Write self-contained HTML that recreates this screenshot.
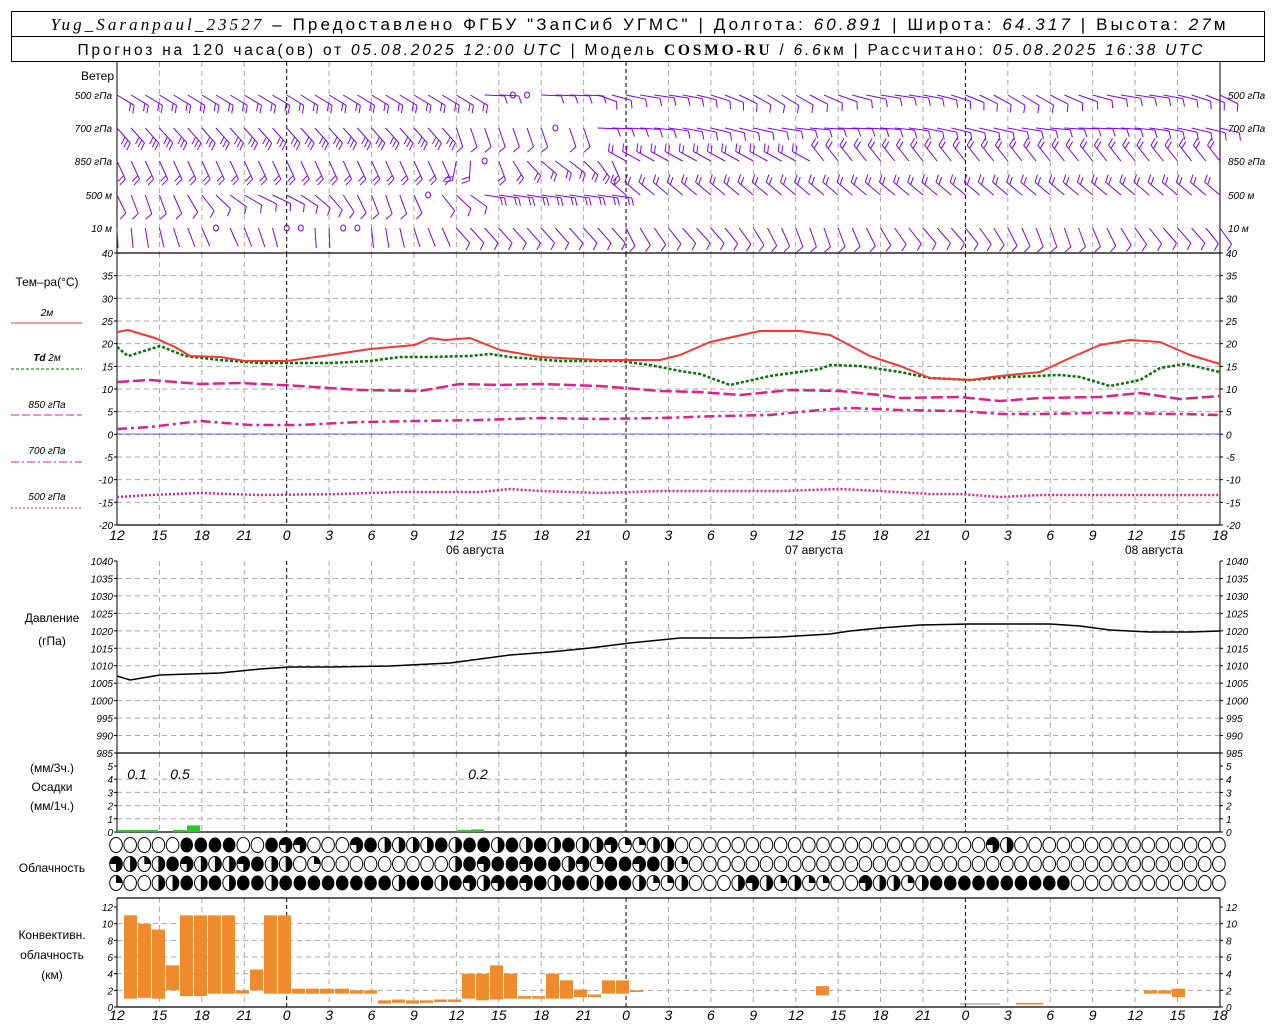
<!DOCTYPE html>
<html><head><meta charset="utf-8"><style>
html,body{margin:0;padding:0;background:#fff;}
svg{display:block;font-family:"Liberation Sans","DejaVu Sans",sans-serif;}
.ax{font-size:10px;font-style:italic;}
.lb{font-size:12px;}
.tm{font-size:14px;font-style:italic;}
</style></head><body>
<svg id="s" width="1280" height="1024" viewBox="0 0 1280 1024" xmlns="http://www.w3.org/2000/svg">
<rect x="0" y="0" width="1280" height="1024" fill="#fff"/>
<rect x="11.5" y="11.5" width="1253" height="50" fill="none" stroke="#000"/>
<line x1="11" y1="36.5" x2="1265" y2="36.5" stroke="#000"/>
<text x="638" y="30" text-anchor="middle" font-size="17" textLength="1175" lengthAdjust="spacing"><tspan font-family="Liberation Serif" font-style="italic">Yug_Saranpaul_23527</tspan> – Предоставлено ФГБУ "ЗапСиб УГМС" | Долгота: <tspan font-style="italic">60.891</tspan> | Широта: <tspan font-style="italic">64.317</tspan> | Высота: <tspan font-style="italic">27</tspan>м</text>
<text x="640" y="55" text-anchor="middle" font-size="15.5" textLength="1125" lengthAdjust="spacing">Прогноз на 120 часа(ов) от <tspan font-style="italic">05.08.2025 12:00 UTC</tspan> | Модель <tspan font-family="Liberation Serif" font-weight="bold">COSMO-RU</tspan> / <tspan font-style="italic">6.6</tspan>км | Рассчитано: <tspan font-style="italic">05.08.2025 16:38 UTC</tspan></text>
<g id="g"></g>
<text x="114" y="80" class="lb" text-anchor="end">Ветер</text>
<text x="47" y="286" class="lb" text-anchor="middle">Тем–ра(°C)</text>
<text x="47" y="316" class="ax" text-anchor="middle" font-style="normal">2м</text>
<line x1="11" y1="323" x2="82" y2="323" stroke="#f33"/>
<text x="47" y="361" class="ax" text-anchor="middle"><tspan font-weight="bold">Td</tspan> 2м</text>
<line x1="11" y1="369" x2="82" y2="369" stroke="#070" stroke-dasharray="3,2"/>
<text x="47" y="408" class="ax" text-anchor="middle">850 гПа</text>
<line x1="11" y1="415" x2="82" y2="415" stroke="#e0208a" stroke-dasharray="8,3"/>
<text x="47" y="454" class="ax" text-anchor="middle">700 гПа</text>
<line x1="11" y1="462" x2="82" y2="462" stroke="#e0208a" stroke-dasharray="8,3,2,3"/>
<text x="47" y="500" class="ax" text-anchor="middle">500 гПа</text>
<line x1="11" y1="508" x2="82" y2="508" stroke="#e0208a" stroke-dasharray="2,2"/>
<text x="52" y="622" class="lb" text-anchor="middle">Давление</text>
<text x="52" y="645" class="lb" text-anchor="middle">(гПа)</text>
<text x="52" y="772" class="lb" text-anchor="middle">(мм/3ч.)</text>
<text x="52" y="791" class="lb" text-anchor="middle">Осадки</text>
<text x="52" y="810" class="lb" text-anchor="middle">(мм/1ч.)</text>
<text x="52" y="872" class="lb" text-anchor="middle">Облачность</text>
<text x="52" y="939" class="lb" text-anchor="middle">Конвективн.</text>
<text x="52" y="959" class="lb" text-anchor="middle">облачность</text>
<text x="52" y="979" class="lb" text-anchor="middle">(км)</text>
<text x="137" y="779" class="tm" text-anchor="middle" font-size="13">0.1</text>
<text x="180" y="779" class="tm" text-anchor="middle" font-size="13">0.5</text>
<text x="478" y="779" class="tm" text-anchor="middle" font-size="13">0.2</text>
<text x="475" y="554" class="lb" text-anchor="middle" font-size="13">06 августа</text>
<text x="814" y="554" class="lb" text-anchor="middle" font-size="13">07 августа</text>
<text x="1154" y="554" class="lb" text-anchor="middle" font-size="13">08 августа</text>
</svg>
<script>
var NS="http://www.w3.org/2000/svg",G=document.getElementById('g');
function el(t,a,txt){var e=document.createElementNS(NS,t);for(var k in a)e.setAttribute(k,a[k]);if(txt!==undefined)e.textContent=txt;G.appendChild(e);return e;}
var X0=117,PX=14.14;function X(h){return X0+h*PX;}
var L=117,R=1220;
var panels=[[62,253],[253,525],[561,753],[753,832],[898,1007]];
for(var h=0;h<=78;h+=3){var x=X(h);var zero=(h==12||h==36||h==60);
 panels.forEach(function(p){el('line',{x1:x,y1:p[0],x2:x,y2:p[1],stroke:zero?'#000':'#aaa','stroke-dasharray':zero?'4,3':'5,4','stroke-width':1});});}
function hgrid(y0,y1,n,fmt,vals,rl){for(var i=0;i<=n;i++){var y=y0+(y1-y0)*i/n;if(i>0&&i<n)el('line',{x1:L,y1:y,x2:R,y2:y,stroke:'#aaa','stroke-dasharray':'5,4'});
 el('line',{x1:L-3,y1:y,x2:L,y2:y,stroke:'#000'});el('line',{x1:R,y1:y,x2:R+3,y2:y,stroke:'#000'});
 if(vals){el('text',{x:L-4,y:y+4,'class':'ax','text-anchor':'end'},vals[i]);if(rl)el('text',{x:R+6,y:y+4,'class':'ax'},vals[i]);}}}
var tv=[];for(var v=40;v>=-20;v-=5)tv.push(v);hgrid(253,525,12,0,tv,1);
var pv=[];for(var v=1040;v>=985;v-=5)pv.push(v);hgrid(561,753,11,0,pv,1);
hgrid(766,832,5,0,[5,4,3,2,1,0],1);
hgrid(907,1007,6,0,[12,10,8,6,4,2,0],1);
[[L,62,L,253],[R,62,R,253],[L,253,L,525],[R,253,R,525],[L,561,L,753],[R,561,R,753],[L,753,L,832],[R,753,R,832],[L,898,L,1007],[R,898,R,1007]].forEach(function(a){el('line',{x1:a[0],y1:a[1],x2:a[2],y2:a[3],stroke:'#000'});});
[[253],[525],[753],[832],[898],[1007]].forEach(function(a){el('line',{x1:L,y1:a[0],x2:R,y2:a[0],stroke:'#000','stroke-width':1.3});});
el('line',{x1:L,y1:434,x2:R,y2:434,stroke:'#33f','stroke-width':0.8});
var tl=[12,15,18,21,0,3,6,9,12,15,18,21,0,3,6,9,12,15,18,21,0,3,6,9,12,15,18];
tl.forEach(function(t,i){el('text',{x:X(i*3),y:540,'class':'tm','text-anchor':'middle'},t);el('text',{x:X(i*3),y:1020,'class':'tm','text-anchor':'middle'},t);});
var rows=[[95,'500 гПа'],[128,'700 гПа'],[161,'850 гПа'],[195,'500  м'],[228,'10   м']];
rows.forEach(function(r,ri){el('text',{x:112,y:r[0]+4,'class':'ax','text-anchor':'end'},r[1]);el('text',{x:1228,y:r[0]+4,'class':'ax'},r[1]);
 for(var h=0;h<=78;h++){var x=X(h),y=r[0];var a,nf;
  var s=Math.sin(h*0.37+ri*1.3);
  if(ri==0){a=h<26?2.6:(h<34?3.1:2.8+0.2*s);nf=h<26?2:1;}
  else if(ri==1){a=h<24?2.3:(h<34?1.9:3.0+0.1*s);nf=h<24?3:1;}
  else if(ri==2){a=h<24?2.0:(h<36?1.9+0.6*s:(h<50?-0.5:-0.9));nf=2;}
  else if(ri==3){a=h<26?2.3+0.4*s:(h<36?3.0:-0.7);nf=h<26?1:2;}
  else {a=h<24?1.8+0.2*s:(h<36?2.3:2.1+0.2*s);nf=h<24?0:1;}
  a=Math.PI-a;
  if((ri==4&&(h==7||h==12||h==13||h==16||h==17))||(ri==0&&(h==28||h==29))||(ri==1&&h==31)||(ri==2&&h==26)||(ri==3&&h==22)){el('ellipse',{cx:x,cy:y,rx:2.5,ry:3,fill:'none',stroke:'#8000ff'});continue;}
  var len=20,ux=Math.cos(a),uy=Math.sin(a);
  var x2=x+ux*len,y2=y+uy*len;
  el('line',{x1:x,y1:y,x2:x2,y2:y2,stroke:'#8000ff'});
  var fa=a+1.2;
  for(var f=0;f<nf;f++){var bx=x2-ux*f*4,by=y2-uy*f*4;
   el('line',{x1:bx,y1:by,x2:bx+Math.cos(fa)*8,y2:by+Math.sin(fa)*8,stroke:'#8000ff'});}
 }});
function poly(pts,st,dash,w){el('polyline',{points:pts,fill:'none',stroke:st,'stroke-width':w||2,'stroke-dasharray':dash||'none','stroke-linejoin':'round'});}
poly("117,497 150,495 200,493 260,495 340,494 400,492 480,492 510,489 540,491 600,493 660,491 720,491 780,491 840,489 880,491 930,494 960,494 1000,497 1040,495 1100,495 1220,495",'#e0208a','2,2',2.5);
poly("117,429 150,427 200,421 250,425 300,425 360,422 420,421 480,420 540,418 600,419 660,418 720,416 770,415 820,410 850,408 900,410 960,411 1000,414 1040,414 1100,413 1180,414 1220,415",'#e0208a','10,4,3,4',2.5);
poly("117,382 150,380 200,384 240,383 300,386 360,390 420,391 460,384 500,385 540,384 600,386 660,391 700,392 740,395 790,390 840,391 880,395 900,398 960,397 1000,401 1040,398 1100,397 1140,393 1180,399 1220,396",'#e0208a','12,4',2.5);
poly("117,347 128,356 160,346 185,356 220,360 260,363 330,363 370,361 400,357 430,357 470,356 490,354 510,357 560,361 620,361 650,365 680,371 700,374 730,385 770,376 820,369 830,365 860,366 900,372 930,378 970,380 1010,377 1060,375 1080,377 1110,386 1140,380 1160,368 1185,364 1220,372",'#070','3,2',2.5);
poly("117,332 128,330 155,338 175,347 190,356 220,357 245,361 287,361 330,355 370,349 415,345 430,338 445,340 470,338 500,350 540,357 600,360 660,360 680,355 710,342 760,331 800,331 830,335 870,356 900,366 930,378 970,380 1000,376 1040,372 1070,358 1100,345 1130,340 1160,342 1190,355 1220,364",'#f33','',2);
poly("117,676 130,680 160,675 190,674 220,673 260,669 290,667 330,667 390,666 450,663 480,659 510,655 550,652 590,648 630,643 680,638 740,638 780,637 830,634 850,631 880,628 920,625 970,624 1010,624 1050,624 1080,626 1110,630 1150,632 1190,632 1220,631",'#000','',1.5);
[[117,159,0.15],[173,187,0.15],[187,201,0.5],[457,471,0.15],[471,485,0.2]].forEach(function(b){var h=b[2]*13.2;el('rect',{x:b[0],y:832-h,width:b[1]-b[0]-1,height:h,fill:'#2c2'});});
var cr=["0000044440043300034222242442424242231122000000000000000000000032000000000000000",
"3212432223422010000000002434434423144342100000000000000000000000000000000000000",
"1002242424424444444424424323434244244211200023212110032212444444444400000000000"];
function circ(cx,cy,c){var rx=6.3,ry=7.5;
 if(c>=4){el('ellipse',{cx:cx,cy:cy,rx:rx,ry:ry,fill:'#000'});return;}
 el('ellipse',{cx:cx,cy:cy,rx:rx,ry:ry,fill:'#fff',stroke:'#000'});
 if(c==1)el('path',{d:'M'+cx+','+cy+'V'+(cy-ry)+'A'+rx+','+ry+' 0 0 1 '+(cx+rx)+','+cy+'Z',fill:'#000'});
 if(c==2)el('path',{d:'M'+cx+','+(cy-ry)+'A'+rx+','+ry+' 0 0 1 '+cx+','+(cy+ry)+'Z',fill:'#000'});
 if(c==3)el('path',{d:'M'+cx+','+cy+'H'+(cx-rx)+'A'+rx+','+ry+' 0 1 1 '+cx+','+(cy+ry)+'Z',fill:'#000'});
}
cr.forEach(function(s,ri){for(var i=0;i<79;i++)circ(X(i)-1,845+ri*19,+s[i]);});
var cy0=1007,K=8.33;
var cb=[[124,138,11,1],[138,152,10,1.1],[152,166,9.3,1],[166,180,5,2],[180,194,11,1.3],[194,208,11,1.3],[208,222,11,1.6],[222,236,11,1.6],[236,250,2,1.6],[250,264,4.5,2],[264,278,11,1.6],[278,292,11,1.6],[292,306,2.2,1.6],[306,320,2.2,1.6],[320,335,2.2,1.6],[335,350,2.2,1.6],[350,364,2,1.6],[364,378,2,1.6],[378,392,0.8,0.4],[392,406,0.9,0.5],[406,420,0.8,0.4],[420,434,0.8,0.5],[434,448,0.9,0.6],[448,462,0.9,0.6],[462,476,4,1],[476,490,4,0.8],[490,504,5,0.9],[504,518,4,1],[518,532,1.3,1],[532,546,1.3,1],[546,560,4,1],[560,574,3.2,1],[574,588,2.1,1.2],[588,602,1.5,1.2],[602,616,3.2,1.6],[616,630,3.2,1.6],[630,644,2,1.8],[816,830,2.5,1.4],[1016,1044,0.5,0.3],[1144,1158,2,1.6],[1158,1172,2,1.6],[1172,1186,2.2,1.2]];
cb.forEach(function(b){el('rect',{x:b[0],y:cy0-b[2]*K,width:b[1]-b[0]-1,height:(b[2]-b[3])*K,fill:'#f08a2e'});});
el('line',{x1:960,y1:1004,x2:1000,y2:1004,stroke:'#888'});
</script>
</body></html>
